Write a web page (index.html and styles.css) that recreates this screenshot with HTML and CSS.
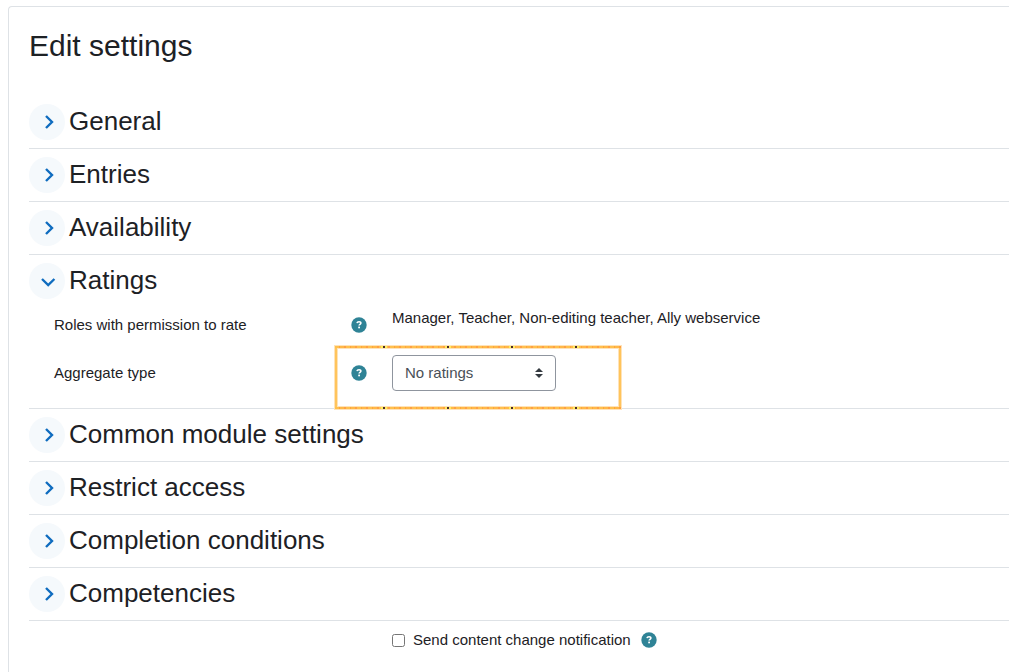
FILE: index.html
```html
<!DOCTYPE html>
<html lang="en">
<head>
    <meta charset="UTF-8">
    <meta name="viewport" content="width=device-width, initial-scale=1.0">
    <title>Edit settings</title>
    <link rel="stylesheet" href="styles.css">
</head>
<body>
    <!-- Shared icons -->
    <svg class="sprite" aria-hidden="true">
        <symbol id="chevron" viewBox="0 0 36 36">
            <path d="M17 12l6 6-6 6" fill="none" stroke="#0f6cbf" stroke-width="2.400"/>
        </symbol>
        <symbol id="chevron-down" viewBox="0 0 36 36">
            <path d="M13 16l6.200 6 6.200-6" fill="none" stroke="#0f6cbf" stroke-width="2.400"/>
        </symbol>
        <symbol id="question" viewBox="0 0 16 16">
            <circle cx="8" cy="8" r="7.700" fill="#2f8396"/>
            <path d="M6 6.200C6.200 5.100 7 4.700 8 4.700c1.100 0 1.900.5 1.900 1.400 0 1.200-1.800 1.200-1.800 2.500" fill="none" stroke="#fff" stroke-width="1.600"/>
            <rect x="7.200" y="9.600" width="1.800" height="1.700" fill="#fff"/>
        </symbol>
    </svg>

    <main class="card">
        <h1>Edit settings</h1>
        <form>
            <section class="section">
                <div class="section-header">
                    <button type="button" class="toggle" aria-label="Expand General"><svg><use href="#chevron"/></svg></button>
                    <h2>General</h2>
                </div>
            </section>
            <section class="section">
                <div class="section-header">
                    <button type="button" class="toggle" aria-label="Expand Entries"><svg><use href="#chevron"/></svg></button>
                    <h2>Entries</h2>
                </div>
            </section>
            <section class="section">
                <div class="section-header">
                    <button type="button" class="toggle" aria-label="Expand Availability"><svg><use href="#chevron"/></svg></button>
                    <h2>Availability</h2>
                </div>
            </section>
            <section class="section">
                <div class="section-header">
                    <button type="button" class="toggle" aria-label="Collapse Ratings"><svg><use href="#chevron-down"/></svg></button>
                    <h2>Ratings</h2>
                </div>
                <div class="fields">
                    <div class="row">
                        <div class="row-label">
                            <span>Roles with permission to rate</span>
                            <button type="button" class="help" aria-label="Help with Roles"><svg><use href="#question"/></svg></button>
                        </div>
                        <div>Manager, Teacher, Non-editing teacher, Ally webservice</div>
                    </div>
                    <div class="row">
                        <div class="row-label">
                            <label for="aggregate">Aggregate type</label>
                            <button type="button" class="help" aria-label="Help with Aggregate type"><svg><use href="#question"/></svg></button>
                        </div>
                        <select id="aggregate" class="select">
                            <option>No ratings</option>
                        </select>
                        <div class="highlight"></div>
                    </div>
                </div>
            </section>
            <section class="section">
                <div class="section-header">
                    <button type="button" class="toggle" aria-label="Expand Common module settings"><svg><use href="#chevron"/></svg></button>
                    <h2>Common module settings</h2>
                </div>
            </section>
            <section class="section">
                <div class="section-header">
                    <button type="button" class="toggle" aria-label="Expand Restrict access"><svg><use href="#chevron"/></svg></button>
                    <h2>Restrict access</h2>
                </div>
            </section>
            <section class="section">
                <div class="section-header">
                    <button type="button" class="toggle" aria-label="Expand Completion conditions"><svg><use href="#chevron"/></svg></button>
                    <h2>Completion conditions</h2>
                </div>
            </section>
            <section class="section">
                <div class="section-header">
                    <button type="button" class="toggle" aria-label="Expand Competencies"><svg><use href="#chevron"/></svg></button>
                    <h2>Competencies</h2>
                </div>
            </section>
            <div class="notify">
                <input type="checkbox" id="notify">
                <label for="notify">Send content change notification</label>
                <button type="button" class="help" aria-label="Help with notifications"><svg><use href="#question"/></svg></button>
            </div>
        </form>
    </main>
</body>
</html>
```

FILE: styles.css
```css
* {
    box-sizing: border-box;
}

body {
    margin: 0;
    padding: 6px 0 0 8px;
    background-color: #fff;
    color: #1d2125;
    font-family: "Liberation Sans", Arial, sans-serif;
    font-size: 15px;
    line-height: 22px;
}

.sprite {
    display: none;
}

.card {
    min-height: calc(100vh - 6px);
    padding: 20px 0 0 20px;
    border: 1px solid #dee2e6;
    border-right: 0;
    border-bottom: 0;
    border-top-left-radius: 4px;
}

h1,
h2 {
    margin: 0;
    font-weight: 400;
}

h1 {
    margin-bottom: 32px;
    font-size: 30px;
    line-height: 37px;
}

h2 {
    font-size: 26px;
    line-height: 34px;
}

.section {
    border-bottom: 1px solid #dee2e6;
}

.section-header {
    display: flex;
    gap: 4px;
    padding: 8px 0;
}

.toggle {
    width: 36px;
    height: 36px;
    padding: 0;
    border: 0;
    border-radius: 50%;
    background-color: #f5f9fc;
    cursor: pointer;
}

.toggle svg {
    display: block;
    width: 36px;
    height: 36px;
}

.fields {
    display: flex;
    flex-direction: column;
    gap: 19px;
    padding: 0 0 17px 25px;
}

.row {
    position: relative;
    display: flex;
    align-items: flex-start;
    gap: 25px;
}

.row-label {
    display: flex;
    flex: 0 0 313px;
    justify-content: space-between;
    align-items: center;
    padding-top: 7px;
}

.help {
    width: 16px;
    height: 16px;
    padding: 0;
    border: 0;
    background: none;
    cursor: pointer;
}

.help svg {
    display: block;
    width: 16px;
    height: 16px;
}

.select {
    width: 164px;
    height: 36px;
    padding: 0 28px 0 12px;
    border: 1px solid #8f959e;
    border-radius: 4px;
    appearance: none;
    background: #fff url("data:image/svg+xml,%3csvg xmlns='http://www.w3.org/2000/svg' viewBox='0 0 4 5'%3e%3cpath fill='%23343a40' d='M2 0L0 2h4zm0 5L0 3h4z'/%3e%3c/svg%3e") no-repeat right 12px center / 8px 10px;
    color: #495057;
    font: inherit;
}

/* Marker frame around the aggregate setting */
.highlight {
    position: absolute;
    top: -9px;
    left: 281px;
    width: 286px;
    height: 63px;
    border: 2px solid #ffc45c;
    box-shadow: 0 0 0 1px #ffe3b8, inset 0 0 0 1px #ffe3b8;
    pointer-events: none;
}

.highlight::before,
.highlight::after {
    content: "";
    position: absolute;
    left: -2px;
    right: -2px;
    height: 2px;
    background:
        repeating-linear-gradient(90deg, transparent 0 46px, #ffee58 46px 48px, #4a2b2b 48px 50px, #ffee58 50px 52px, transparent 52px 64px),
        repeating-linear-gradient(90deg, #ffc04d 0 4px, #ffa43d 4px 5px, #ffb847 5px 9px, #ff9f45 9px 11px);
}

.highlight::before {
    top: -2px;
}

.highlight::after {
    bottom: -2px;
}

.notify {
    display: flex;
    align-items: center;
    padding: 8px 0 0 363px;
}

.notify input {
    width: 13px;
    height: 13px;
    margin: 0 8px 0 0;
}

.notify .help {
    margin-left: 10px;
}
```
